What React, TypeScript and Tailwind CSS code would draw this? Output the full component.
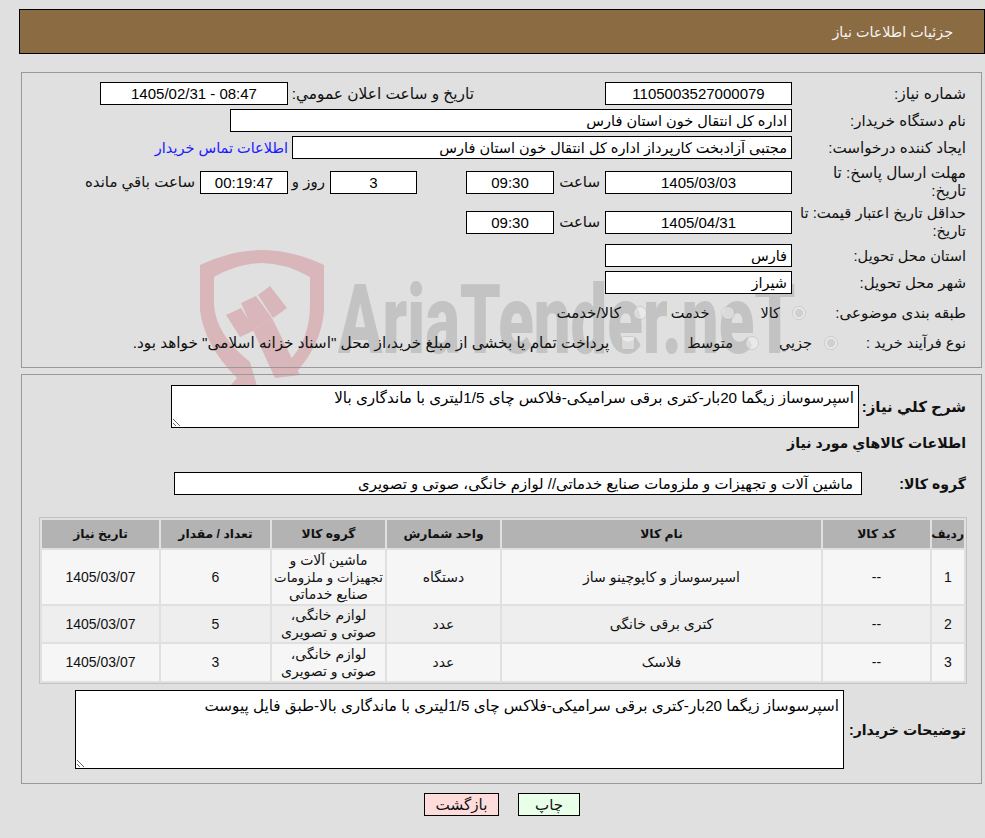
import React from "react";

const inputBase =
  "h-[23px] shrink-0 border border-black bg-white px-1 text-[14.5px] text-black outline-none";
const digitInput =
  "h-[23px] shrink-0 border border-black bg-white px-1 text-center text-[15px] text-black outline-none";

function Watermark() {
  return (
    <div className="absolute left-[190px] top-[240px] -z-10 h-[150px] w-[640px]" aria-hidden="true">
      <svg className="absolute left-0 top-0" width="150" height="146" viewBox="190 240 150 146">
        <path
          fill="#d8b6b9"
          d="M200 265 Q232 250 262 250 Q292 250 324 265 L324 310 Q322 345 293 376 L288 362 Q310 340 310 305 L310 277 Q285 263 262 263 Q238 263 214 277 L214 305 Q216 335 250 362 L257 386 L230 386 L237 378 Q204 345 200 310 Z"
        />
        <path fill="#d8b6b9" d="M226 315 L241 308 L255 330 L240 337 Z" />
        <path fill="#d8b6b9" d="M241 303 L256 296 L272 318 L253 330 Z" />
        <path fill="#d8b6b9" d="M258 295 L270 286 L287 308 L273 318 Z" />
        <path fill="#d8b6b9" d="M253 330 L272 318 L300 375 L275 378 Z" />
      </svg>
      <span className="absolute left-[148px] top-[25px] origin-left scale-x-[0.68] whitespace-nowrap font-['Roboto',sans-serif] text-[96px] leading-[110px] font-black text-[#c3c3c3]">
        AriaTender.neT
      </span>
    </div>
  );
}

function Label({ children, className }: { children: React.ReactNode; className: string }) {
  return <div className={"shrink-0 whitespace-nowrap " + className}>{children}</div>;
}

export default function App() {
  return (
    <div
      dir="rtl"
      className="relative isolate h-[838px] w-[985px] overflow-hidden bg-[#e0e0e0] pt-[9px] font-['Liberation_Sans','DejaVu_Sans',sans-serif] text-[15px] leading-[18px] text-[#111]"
    >
      <Watermark />

      <div className="ml-[19px] flex h-[45px] items-center border border-black bg-[#8b6b42] pr-[31px] text-[14.3px] text-[#f4f4f4]">
        جزئیات اطلاعات نیاز
      </div>

      <section className="ml-[21px] mr-[3px] mt-[18px] flex h-[296px] flex-col border border-[#999999] pr-[15px] pt-[9px]">
        <div className="flex h-[23px] items-center">
          <Label className="w-[174px] text-[15.5px]">شماره نیاز:</Label>
          <input readOnly value="1105003527000079" className={digitInput + " w-[187px]"} />
          <Label className="mr-[131px] w-[181px] text-[15.4px]">تاریخ و ساعت اعلان عمومي:</Label>
          <input readOnly dir="ltr" value="1405/02/31 - 08:47" className={digitInput + " mr-[5px] w-[188px] text-[15.4px]"} />
        </div>
        <div className="mt-1 flex h-[23px] items-center">
          <Label className="w-[174px]">نام دستگاه خریدار:</Label>
          <input readOnly value="اداره کل انتقال خون استان فارس" className={inputBase + " w-[562px]"} />
        </div>
        <div className="mt-1 flex h-[23px] items-center">
          <Label className="w-[174px] text-[15.2px]">ایجاد کننده درخواست:</Label>
          <input readOnly value="مجتبی آزادبخت کارپرداز اداره کل انتقال خون استان فارس" className={inputBase + " w-[500px]"} />
          <a className="mr-1 shrink-0 text-[14.5px] text-[#1a1aff]">اطلاعات تماس خریدار</a>
        </div>
        <div className="mt-[5px] flex h-[36px] items-center">
          <Label className="w-[174px] text-[15.3px]">
            مهلت ارسال پاسخ: تا
            <br />
            تاریخ:
          </Label>
          <input readOnly value="1405/03/03" className={digitInput + " h-[22px] w-[187px]"} />
          <Label className="mr-[5px] w-[42px]">ساعت</Label>
          <input readOnly value="09:30" className={digitInput + " mr-1 h-[22px] w-[88px]"} />
          <input readOnly value="3" className={digitInput + " mr-[49px] h-[22px] w-[87px]"} />
          <Label className="mr-[5px] w-[28px]">روز و</Label>
          <input readOnly value="00:19:47" className={digitInput + " mr-[9px] h-[22px] w-[88px] bg-[#ffffe8]"} />
          <Label className="mr-[5px]">ساعت باقي مانده</Label>
        </div>
        <div className="mt-1 flex h-[36px] items-center">
          <Label className="w-[174px] text-[14.8px]">
            حداقل تاریخ اعتبار قیمت: تا
            <br />
            تاریخ:
          </Label>
          <input readOnly value="1405/04/31" className={digitInput + " w-[187px]"} />
          <Label className="mr-[5px] w-[42px]">ساعت</Label>
          <input readOnly value="09:30" className={digitInput + " mr-1 w-[88px]"} />
        </div>
        <div className="mt-1 flex h-[23px] items-center">
          <Label className="w-[174px] text-[14.6px]">استان محل تحویل:</Label>
          <input readOnly value="فارس" className={inputBase + " w-[187px]"} />
        </div>
        <div className="mt-1 flex h-[23px] items-center">
          <Label className="w-[174px]">شهر محل تحویل:</Label>
          <input readOnly value="شیراز" className={inputBase + " w-[187px] bg-transparent"} />
        </div>
        <div className="mt-2 flex h-[22px] items-center text-[14.5px]">
          <Label className="w-[160px] text-[15px]">طبقه بندی موضوعی:</Label>
          <input type="radio" disabled defaultChecked name="a" className="m-0 h-[14px] w-[14px] shrink-0 opacity-70" />
          <span className="mr-3">کالا</span>
          <input type="radio" disabled name="a" className="m-0 mr-[25px] h-[14px] w-[14px] shrink-0 opacity-70" />
          <span className="mr-3">خدمت</span>
          <input type="radio" disabled name="a" className="m-0 mr-[24px] h-[14px] w-[14px] shrink-0 opacity-70" />
          <span className="mr-3 text-[15px]">کالا/خدمت</span>
        </div>
        <div className="mt-2 flex h-[22px] items-center text-[14.5px]">
          <Label className="w-[128px]">نوع فرآیند خرید :</Label>
          <input type="radio" disabled defaultChecked name="b" className="m-0 h-[14px] w-[14px] shrink-0 opacity-70" />
          <span className="mr-3">جزیي</span>
          <input type="radio" disabled name="b" className="m-0 mr-[20px] h-[14px] w-[14px] shrink-0 opacity-70" />
          <span className="mr-3">متوسط</span>
          <input type="checkbox" disabled className="m-0 mr-[52px] h-[14px] w-[14px] shrink-0 opacity-70" />
          <span className="mr-3 text-[15.3px]">پرداخت تمام یا بخشی از مبلغ خرید،از محل "اسناد خزانه اسلامی" خواهد بود.</span>
        </div>
      </section>

      <section className="ml-[21px] mr-[3px] mt-[6px] flex h-[410px] flex-col border border-[#999999] bg-transparent pr-[15px] pt-[10px] text-[14.1px]">
        <div className="flex h-[43px] items-center">
          <Label className="w-[107px] text-[15px] font-bold">شرح كلي نياز:</Label>
          <textarea
            readOnly
            defaultValue="اسپرسوساز زیگما 20بار-کتری برقی سرامیکی-فلاکس چای 1/5لیتری با ماندگاری بالا"
            className="h-[43px] w-[688px] shrink-0 border border-black bg-white px-1 pt-[3px] text-[15.2px] leading-[18px] text-black outline-none"
          />
        </div>
        <div className="mt-[6px] flex h-[18px] items-center font-bold">اطلاعات کالاهاي مورد نياز</div>
        <div className="mt-[20px] flex h-[23px] items-center">
          <Label className="w-[104px] font-bold">گروه کالا:</Label>
          <input
            readOnly
            value="ماشین آلات و تجهیزات و ملزومات صنایع خدماتی// لوازم خانگی، صوتی و تصویری"
            className={inputBase + " w-[688px] pr-2 text-[14.9px]"}
          />
        </div>
        <table className="-mr-px mt-[22px] h-[167px] w-[928px] table-fixed border-separate border-spacing-[2px] border border-[#c2c2c2] text-center text-[14px] leading-[17px]">
          <colgroup>
            <col className="w-[32px]" />
            <col className="w-[107px]" />
            <col className="w-[319px]" />
            <col className="w-[113px]" />
            <col className="w-[113px]" />
            <col className="w-[109px]" />
            <col />
          </colgroup>
          <thead>
            <tr className="h-[28px] bg-[#b3b3b3] text-[12.3px] font-bold">
              <th>ردیف</th>
              <th>کد کالا</th>
              <th>نام کالا</th>
              <th>واحد شمارش</th>
              <th>گروه کالا</th>
              <th>تعداد / مقدار</th>
              <th>تاریخ نیاز</th>
            </tr>
          </thead>
          <tbody>
            <tr className="h-[54px] bg-[#f6f6f6]">
              <td>1</td>
              <td>--</td>
              <td>اسپرسوساز و کاپوچینو ساز</td>
              <td>دستگاه</td>
              <td className="whitespace-nowrap">
                ماشین آلات و
                <br />
                <span className="text-[13.3px]">تجهیزات و ملزومات</span>
                <br />
                صنایع خدماتی
              </td>
              <td>6</td>
              <td>1405/03/07</td>
            </tr>
            <tr className="h-[36px] bg-[#eeeeee]">
              <td>2</td>
              <td>--</td>
              <td>کتری برقی خانگی</td>
              <td>عدد</td>
              <td className="whitespace-nowrap">
                لوازم خانگی،
                <br />
                صوتی و تصویری
              </td>
              <td>5</td>
              <td>1405/03/07</td>
            </tr>
            <tr className="h-[37px] bg-[#f6f6f6]">
              <td>3</td>
              <td>--</td>
              <td>فلاسک</td>
              <td>عدد</td>
              <td className="whitespace-nowrap">
                لوازم خانگی،
                <br />
                صوتی و تصویری
              </td>
              <td>3</td>
              <td>1405/03/07</td>
            </tr>
          </tbody>
        </table>
        <div className="mt-[6px] flex h-[79px] items-center">
          <Label className="w-[122px] font-bold">توضیحات خریدار:</Label>
          <textarea
            readOnly
            defaultValue="اسپرسوساز زیگما 20بار-کتری برقی سرامیکی-فلاکس چای 1/5لیتری با ماندگاری بالا-طبق فایل پیوست"
            className="h-[79px] w-[769px] shrink-0 border border-black bg-white px-1 pt-[6px] text-[15.2px] leading-[18px] text-black outline-none"
          />
        </div>
      </section>

      <div className="ml-[19px] mt-[9px] flex justify-center gap-[19px]">
        <button className="h-[23px] w-[62px] border border-black bg-[#e8ffe8] text-[15px]">چاپ</button>
        <button className="h-[23px] w-[75px] border border-black bg-[#ffdcdc] text-[15.2px]">بازگشت</button>
      </div>
    </div>
  );
}
